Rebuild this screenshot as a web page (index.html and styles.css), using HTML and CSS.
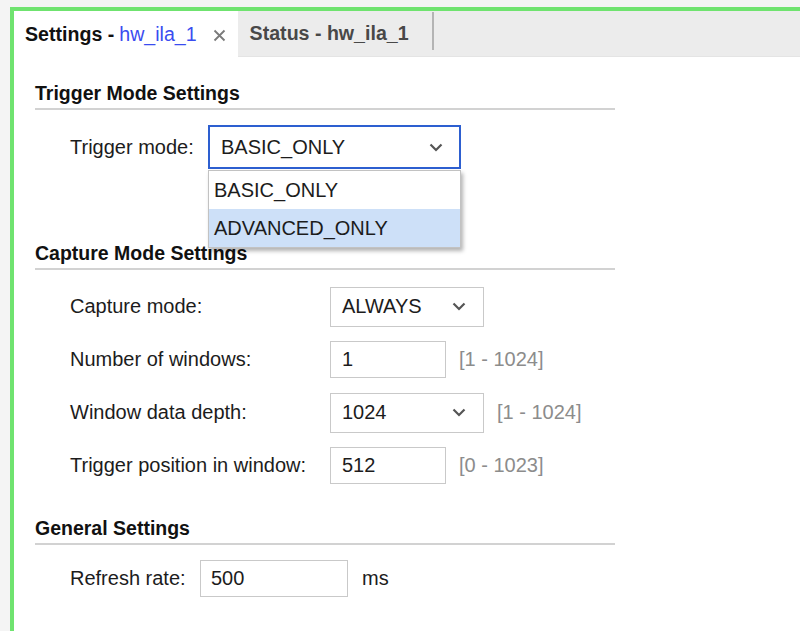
FILE: index.html
```html
<!DOCTYPE html>
<html lang="en">
<head>
    <meta charset="UTF-8">
    <title>Settings - hw_ila_1</title>
    <link rel="stylesheet" href="styles.css">
</head>
<body>
    <div class="frame">
        <div class="tabbar">
            <div class="tab active">
                <span class="tab-title">Settings - </span><span class="tab-link">hw_ila_1</span>
                <svg class="tab-close" width="13" height="13" viewBox="0 0 13 13"><path d="M1.5 1.5 L11.5 11.5 M11.5 1.5 L1.5 11.5" stroke="#7a7a7a" stroke-width="1.8" fill="none"/></svg>
            </div>
            <div class="tab">Status - hw_ila_1</div>
            <div class="tab-sep"></div>
        </div>

        <div class="content">
            <div class="section first">
                <div class="section-title">Trigger Mode Settings</div>
                <div class="form trigger">
                    <label>Trigger mode:</label>
                    <div class="combo-wrap">
                        <div class="select focused wide">
                            <span>BASIC_ONLY</span>
                            <svg width="14" height="9" viewBox="0 0 14 9"><path d="M1.5 1.5 L7 7 L12.5 1.5" stroke="#555" stroke-width="2.2" fill="none"/></svg>
                        </div>
                        <div class="popup">
                            <div class="option">BASIC_ONLY</div>
                            <div class="option selected">ADVANCED_ONLY</div>
                        </div>
                    </div>
                </div>
            </div>

            <div class="section second">
                <div class="section-title">Capture Mode Settings</div>
                <div class="form rows">
                    <label>Capture mode:</label>
                    <div class="field">
                        <div class="select">
                            <span>ALWAYS</span>
                            <svg width="14" height="9" viewBox="0 0 14 9"><path d="M1.5 1.5 L7 7 L12.5 1.5" stroke="#555" stroke-width="2.2" fill="none"/></svg>
                        </div>
                    </div>

                    <label>Number of windows:</label>
                    <div class="field">
                        <div class="input">1</div>
                        <span class="hint">[1 - 1024]</span>
                    </div>

                    <label>Window data depth:</label>
                    <div class="field">
                        <div class="select">
                            <span>1024</span>
                            <svg width="14" height="9" viewBox="0 0 14 9"><path d="M1.5 1.5 L7 7 L12.5 1.5" stroke="#555" stroke-width="2.2" fill="none"/></svg>
                        </div>
                        <span class="hint">[1 - 1024]</span>
                    </div>

                    <label>Trigger position in window:</label>
                    <div class="field">
                        <div class="input">512</div>
                        <span class="hint">[0 - 1023]</span>
                    </div>
                </div>
            </div>

            <div class="section third">
                <div class="section-title">General Settings</div>
                <div class="form general">
                    <label>Refresh rate:</label>
                    <div class="field">
                        <div class="input long">500</div>
                        <span class="unit">ms</span>
                    </div>
                </div>
            </div>
        </div>
    </div>
</body>
</html>
```

FILE: styles.css
```css
body {
    margin: 0;
    background-color: #f4f4f4;
    font-family: "Liberation Sans", Arial, sans-serif;
    color: #1c1c1c;
    height: 631px;
    overflow: hidden;
}

.frame {
    margin: 7px 0 0 10px;
    border-top: 4px solid #6fe36f;
    border-left: 4px solid #6fe36f;
    background-color: white;
    height: 620px;
}

.tabbar {
    display: flex;
    align-items: stretch;
    height: 46px;
    background-color: #ececec;
    border-bottom: 1px solid #e4e4e4;
    box-sizing: border-box;
}

.tab {
    display: flex;
    align-items: center;
    padding: 0 23px 0 12px;
    font-size: 19.6px;
    font-weight: bold;
    color: #484848;
}

.tab.active {
    background-color: white;
    color: #111;
    padding: 0 12px 0 11px;
    margin-bottom: -1px;
}

.tab-link {
    color: #3a4cf0;
    font-weight: normal;
    margin-left: 5px;
}

.tab-close {
    margin-left: 16px;
    margin-top: 3px;
}

.tab-sep {
    width: 2px;
    margin: 1px 0 6px 0;
    background-color: #b4b4b4;
}

.content {
    padding-left: 21px;
}

.section {
    width: 580px;
}

.section.first {
    padding-top: 24px;
}

.section.second {
    margin-top: 72px;
}

.section.third {
    margin-top: 30px;
}

.section-title {
    font-size: 19.5px;
    font-weight: bold;
    line-height: 24px;
    padding-bottom: 3px;
    border-bottom: 2px solid #d2d2d2;
    color: #111;
}

.form {
    display: grid;
    grid-template-columns: 138px 1fr;
    align-items: center;
    padding-left: 35px;
    margin-top: 15px;
    font-size: 20px;
}

.form.rows {
    grid-template-columns: 260px 1fr;
    row-gap: 12px;
    grid-auto-rows: 41px;
    margin-top: 16px;
}

.form.general {
    grid-template-columns: 130px 1fr;
}

.field {
    display: flex;
    align-items: center;
}

.combo-wrap {
    position: relative;
}

.select {
    display: flex;
    align-items: center;
    justify-content: space-between;
    box-sizing: border-box;
    width: 154px;
    height: 40px;
    padding: 0 17px 0 11px;
    border: 1px solid #c9c9c9;
    background-color: white;
}

.select.wide {
    width: 253px;
    height: 44px;
}

.select.focused {
    border: 2px solid #2d5fd0;
    padding: 0 16px 0 11px;
}

.input {
    box-sizing: border-box;
    width: 116px;
    height: 37px;
    line-height: 35px;
    padding-left: 11px;
    border: 1px solid #c9c9c9;
}

.input.long {
    width: 148px;
    padding-left: 10px;
}

.hint {
    margin-left: 13px;
    color: #8c8c8c;
}

.unit {
    margin-left: 14px;
}

.popup {
    position: absolute;
    top: 45px;
    left: 0;
    width: 253px;
    box-sizing: border-box;
    border: 1px solid #c2c2c2;
    background-color: white;
    box-shadow: 2px 3px 4px rgba(0, 0, 0, 0.3);
    z-index: 2;
}

.option {
    height: 38px;
    line-height: 38px;
    padding-left: 5px;
}

.option.selected {
    background-color: #cde0f8;
}
```
